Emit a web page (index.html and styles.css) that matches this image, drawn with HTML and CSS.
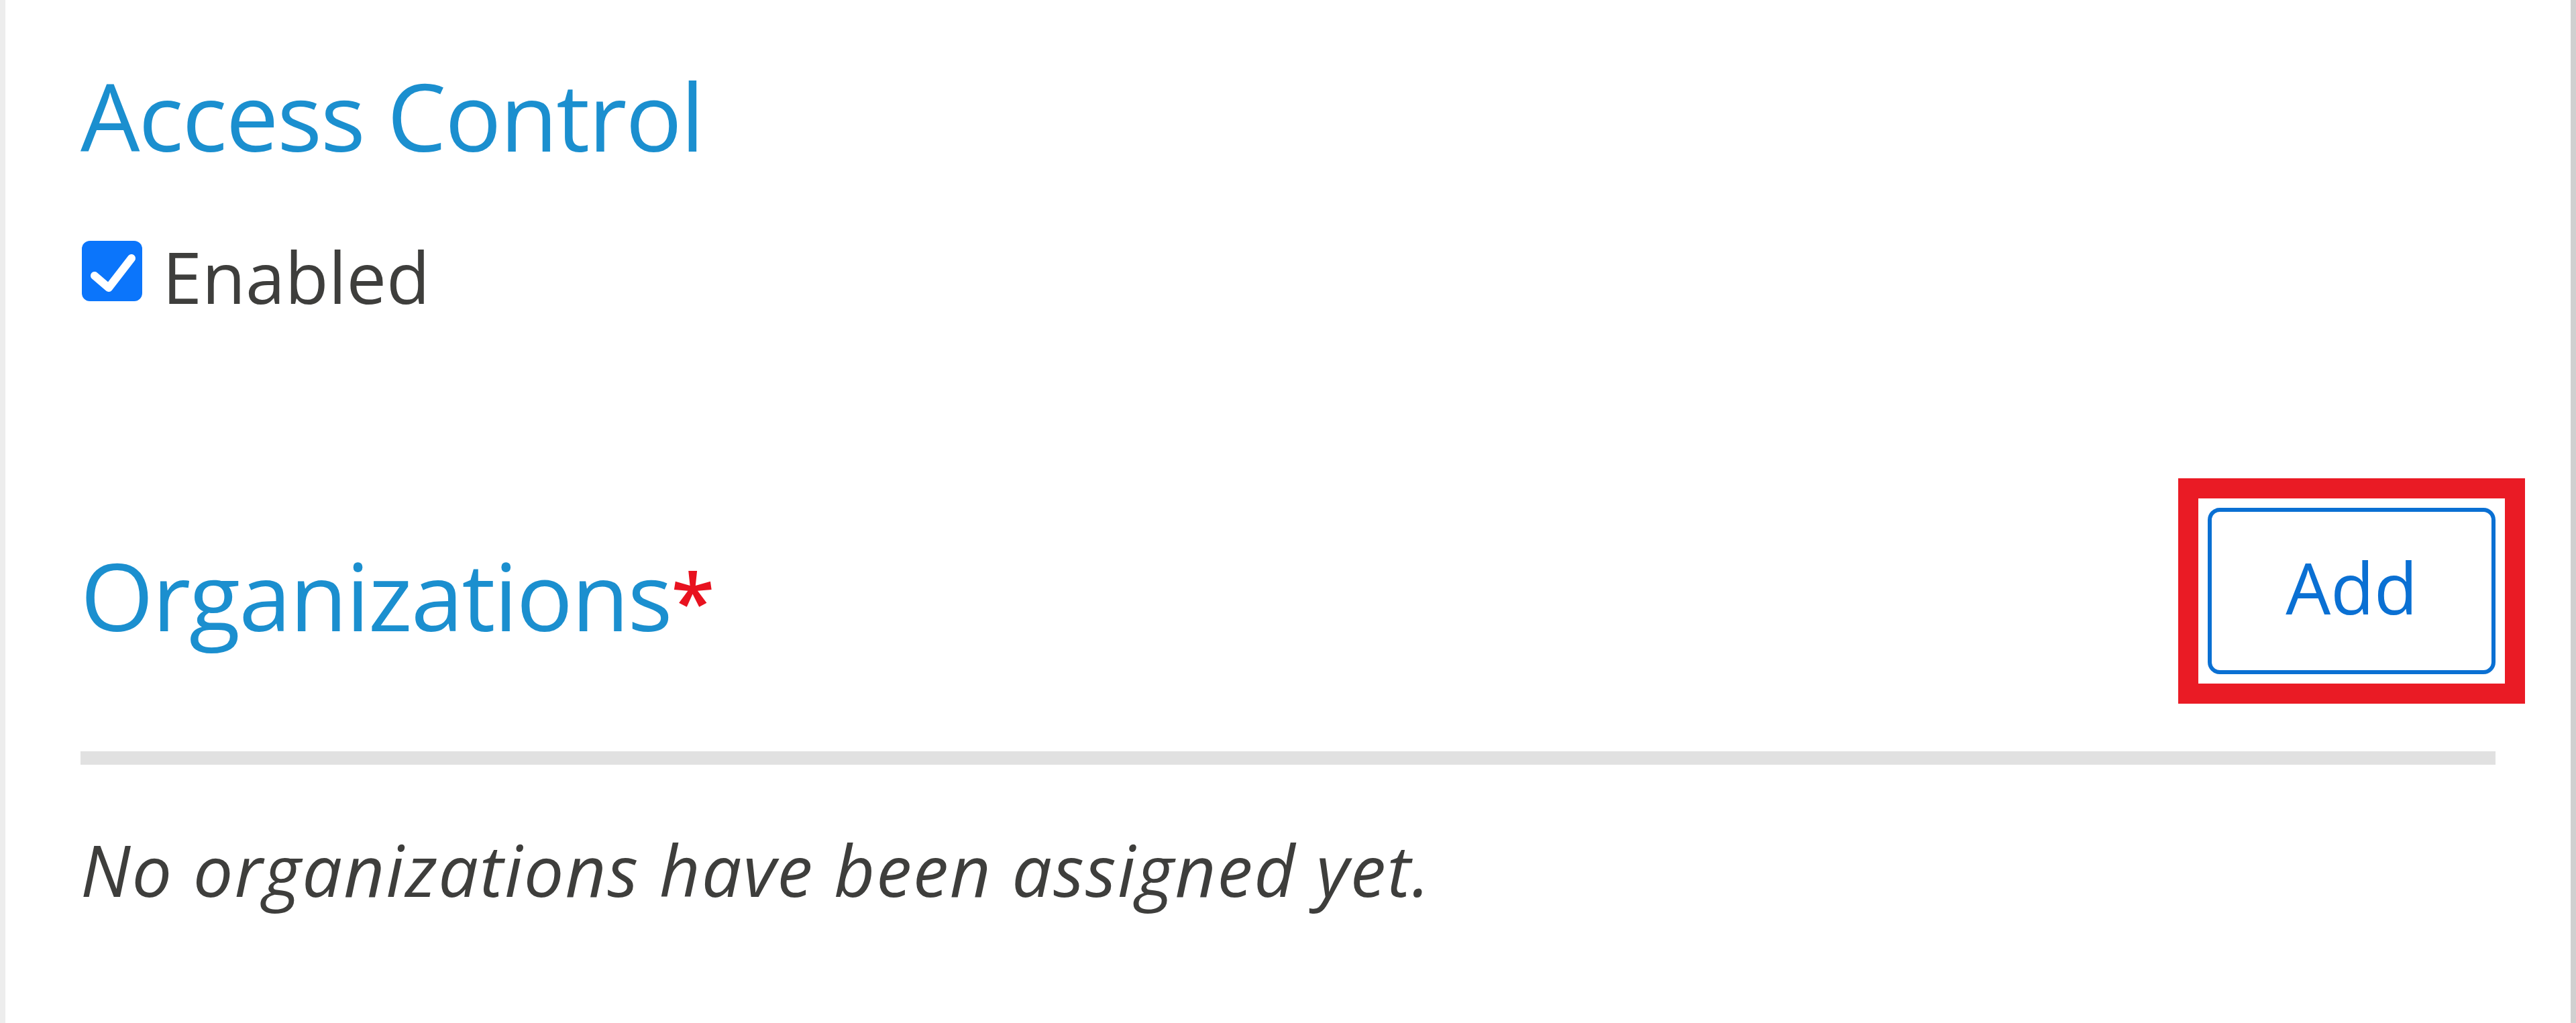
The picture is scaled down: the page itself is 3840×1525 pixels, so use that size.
FILE: index.html
```html
<!DOCTYPE html>
<html lang="en">
<head>
<meta charset="utf-8">
<title>Access Control</title>
<link rel="stylesheet" href="styles.css">
</head>
<body>
<main class="panel">
  <h2 class="section-title">Access Control</h2>
  <label class="toggle">
    <span class="toggle-box" aria-hidden="true">
      <svg viewBox="0 0 90 90" width="90" height="90">
        <rect x="0" y="0" width="90" height="90" rx="12" ry="12" fill="#0b75fb"/>
        <path d="M19 52 L40 70 L74 26" fill="none" stroke="#fff" stroke-width="12" stroke-linecap="round" stroke-linejoin="round"/>
      </svg>
    </span>
    <span class="toggle-label">Enabled</span>
  </label>

  <div class="org-header">
    <h2 class="section-title org-title">Organizations<span class="required">*</span></h2>
    <span class="highlight">
      <button class="btn-add" type="button">Add</button>
    </span>
  </div>
  <div class="divider"></div>
  <p class="empty-note">No organizations have been assigned yet.</p>
</main>
</body>
</html>
```

FILE: styles.css
```css
html, body {
  margin: 0;
  padding: 0;
  background: #ffffff;
}

.panel {
  box-sizing: border-box;
  min-height: 1525px;
  padding: 102px 112px 0 112px;
  border-left: 8px solid #ededed;
  border-right: 8px solid #d0d0d0;
  font-family: "Open Sans", "Noto Sans", sans-serif;
  color: #3e3e3c;
}

.section-title {
  margin: 0;
  font-size: 140px;
  line-height: 140px;
  font-weight: 400;
  color: #1b8fcf;
  letter-spacing: -2px;
}

.required {
  color: #e8121f;
  font-weight: 600;
  font-size: 118px;
  margin-left: 0;
}

.toggle {
  display: flex;
  align-items: flex-start;
  margin-top: 117px;
  gap: 30px;
}

.toggle-box {
  display: block;
  width: 90px;
  height: 90px;
  margin-left: 2px;
}

.toggle-box svg {
  display: block;
}

.toggle-label {
  font-size: 106px;
  line-height: 106px;
  color: #3e3e3c;
}

.org-header {
  display: flex;
  justify-content: space-between;
  align-items: center;
  margin-top: 292px;
}

.org-title {
  margin-top: 20px;
}

/* square red frame drawn around the Add button */
.highlight {
  position: relative;
  display: block;
}

.highlight::after {
  content: "";
  position: absolute;
  inset: -44px;
  border: 30px solid #ea1b25;
  pointer-events: none;
}

.btn-add {
  display: block;
  box-sizing: border-box;
  width: 429px;
  height: 248px;
  padding: 0 0 12px 0;
  border: 6px solid #0a70d3;
  border-radius: 18px;
  background: #ffffff;
  color: #0a70d3;
  font-family: "Open Sans", "Noto Sans", sans-serif;
  font-size: 106px;
  line-height: 106px;
}

.divider {
  height: 20px;
  margin-top: 115px;
  background: #e1e1e1;
}

.empty-note {
  margin: 103px 0 0 0;
  font-size: 106px;
  line-height: 106px;
  font-style: italic;
  letter-spacing: 2px;
  color: #3e3e3c;
}
```
